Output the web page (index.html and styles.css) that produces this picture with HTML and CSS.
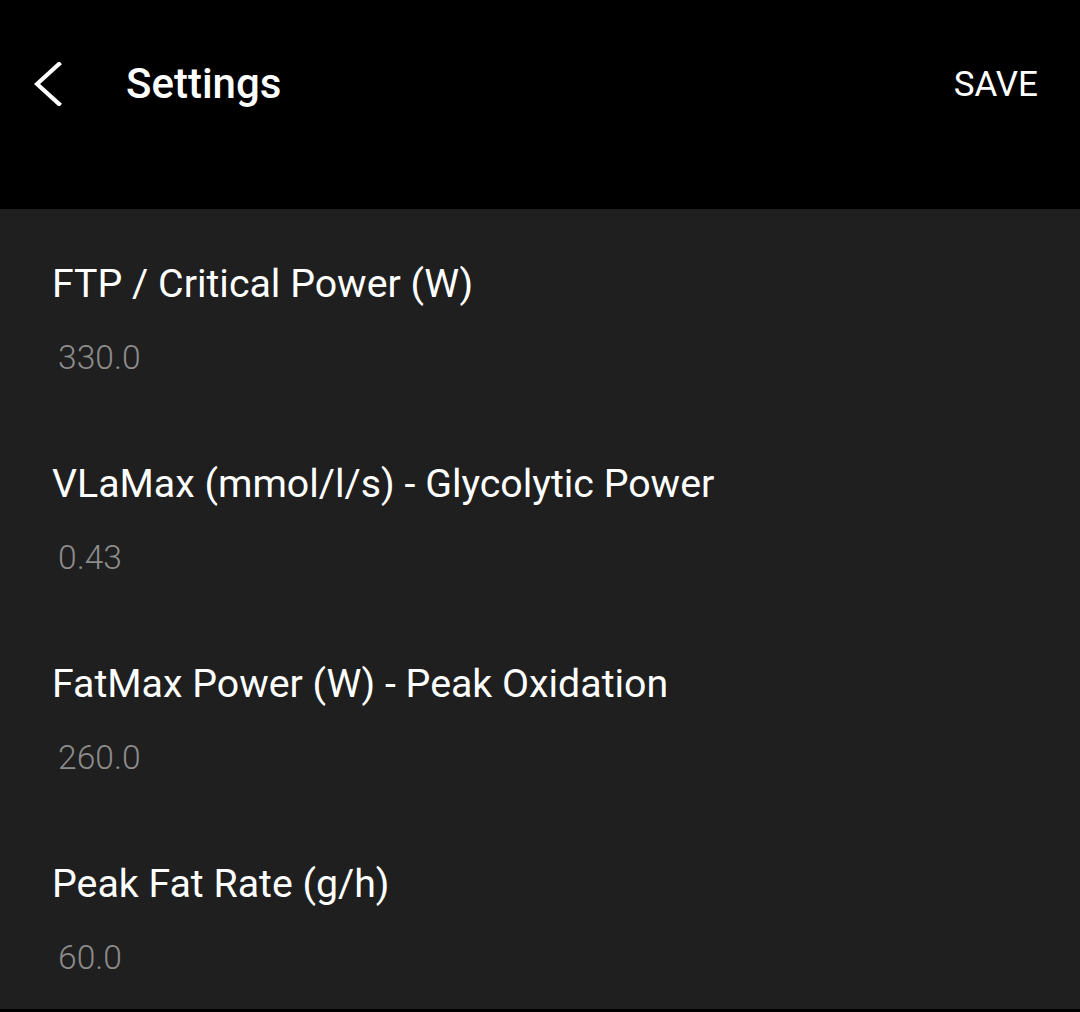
FILE: index.html
```
<!DOCTYPE html>
<html>
<head>
<meta charset="utf-8">
<link rel="stylesheet" href="styles.css">
</head>
<body>
<div class="app">
  <header class="header">
    <div class="bar">
      <button class="back" aria-label="Back">
        <svg width="28" height="44" viewBox="0 0 28 44"><path d="M25 2 L3 22 L25 42" fill="none" stroke="#fff" stroke-width="4.2" stroke-linecap="square" stroke-linejoin="miter"/></svg>
      </button>
      <h1 class="title">Settings</h1>
      <span class="save">SAVE</span>
    </div>
  </header>
  <main class="list">
    <div class="row">
      <div class="label">FTP / Critical Power (W)</div>
      <div class="value">330.0</div>
    </div>
    <div class="row">
      <div class="label">VLaMax (mmol/l/s) - Glycolytic Power</div>
      <div class="value">0.43</div>
    </div>
    <div class="row">
      <div class="label">FatMax Power (W) - Peak Oxidation</div>
      <div class="value">260.0</div>
    </div>
    <div class="row">
      <div class="label">Peak Fat Rate (g/h)</div>
      <div class="value">60.0</div>
    </div>
  </main>
  <div class="bottom"></div>
</div>
</body>
</html>
```
FILE: styles.css
```
html, body {
  margin: 0;
  padding: 0;
  background: #1f1f1f;
  font-family: Roboto, "Noto Sans", sans-serif;
  color: #fff;
}
.app {
  width: 1080px;
  height: 1012px;
  display: flex;
  flex-direction: column;
  overflow: hidden;
}
.header {
  height: 209px;
  background: #000;
  flex: none;
}
.bar {
  height: 168px;
  display: flex;
  align-items: center;
  padding: 0 42px 0 34px;
}
.back {
  background: none;
  border: 0;
  padding: 0;
  width: 28px;
  height: 44px;
  display: flex;
}
.title {
  margin: 0 0 0 64px;
  font-size: 42px;
  font-weight: 500;
  line-height: 1;
  flex: 1;
}
.save {
  font-size: 35px;
  font-weight: 400;
  line-height: 1;
}
.list {
  flex: none;
}
.row {
  height: 200px;
  box-sizing: border-box;
  padding: 56px 0 0 52px;
}
.label {
  font-size: 39.3px;
  line-height: 38px;
  font-weight: 400;
  color: #fff;
}
.value {
  margin-top: 39px;
  margin-left: 6px;
  font-size: 33.6px;
  line-height: 32px;
  font-weight: 300;
  color: #8c8c8c;
}
.bottom {
  flex: 1;
  background: #000;
}
```
